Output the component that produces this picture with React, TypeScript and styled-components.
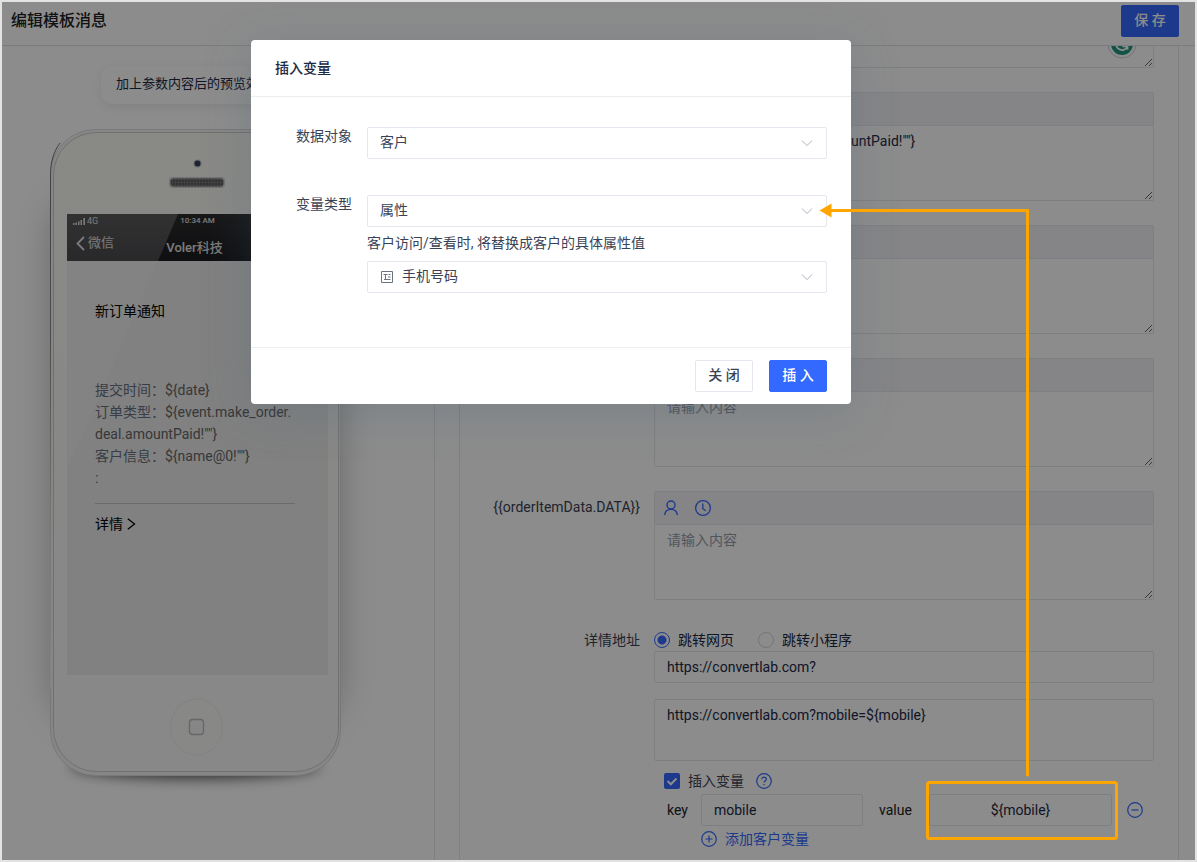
import React from "react";
import styled, { createGlobalStyle, css } from "styled-components";

const ink = "#1d2843";
const label = "#3a4356";
const blue = "#3369ff";
const line = "#e6e7ee";

const Global = createGlobalStyle`
  * { box-sizing: border-box; }
  body {
    margin: 0;
    background: #e3e3e3;
    color: ${label};
    font: 400 14px/22px Roboto, "Noto Sans CJK SC", sans-serif;
  }
  button, input, select, textarea { font: inherit; color: inherit; margin: 0; }
`;

const Frame = styled.div`
  position: relative;
  height: 100vh;
  border: 2px solid #e3e3e3;
  overflow: hidden;
`;

const Page = styled.div`
  display: flex;
  flex-direction: column;
  height: 100%;
  background: #fff;
  isolation: isolate;
`;

const Header = styled.header`
  display: flex;
  flex: none;
  align-items: flex-start;
  justify-content: space-between;
  height: 44px;
  padding: 3px 16px 0 9px;
  border-bottom: 1px solid #e2e2e6;
`;

const PageTitle = styled.h1`
  margin: 0;
  padding-top: 4px;
  font-size: 16px;
  line-height: 24px;
  font-weight: 500;
  color: #222;
`;

const Button = styled.button<{ $primary?: boolean }>`
  width: 58px;
  height: 32px;
  padding: 0 0 2px;
  border: 1px solid ${(p) => (p.$primary ? blue : line)};
  border-radius: 2px;
  background: ${(p) => (p.$primary ? blue : "#fff")};
  color: ${(p) => (p.$primary ? "#fff" : label)};
  font-weight: 500;
  line-height: 22px;
`;

const Columns = styled.div`
  display: flex;
  flex: 1;
  gap: 24px;
  min-height: 0;
  padding-right: 16px;
  overflow: hidden;
`;

const Preview = styled.section`
  display: flex;
  flex: none;
  flex-direction: column;
  gap: 25px;
  width: 433px;
  padding: 20px 0 0 48px;
  border-right: 1px solid ${line};
`;

const Bubble = styled.p`
  align-self: flex-start;
  margin: 0 0 0 51px;
  padding: 7px 15px 9px;
  border-radius: 12px;
  box-shadow: 0 3px 10px rgba(0, 0, 0, 0.08);
  font-size: 13px;
  color: ${ink};
`;

const Phone = styled.div`
  display: grid;
  width: 291px;
  height: 647px;
  > * { grid-area: 1 / 1; }
`;

const PhoneArt = styled.svg`
  display: block;
  overflow: visible;
`;

const Screen = styled.div`
  z-index: 1;
  margin: 85px 13px 101px 17px;
  color: #666;
`;

const StatusBar = styled.div`
  display: grid;
  grid-template-columns: 1fr 1fr 1fr;
  align-items: center;
  height: 14px;
  padding: 0 6px;
  font-size: 9px;
  line-height: 14px;
  color: #e0e0e0;
`;

const Signal = styled.span`
  display: flex;
  align-items: center;
  gap: 2px;
`;

const ClockText = styled.b`
  font-size: 8px;
  text-align: center;
  font-weight: 500;
`;

const NavBar = styled.div`
  display: grid;
  grid-template-columns: 1fr 1fr 1fr;
  align-items: start;
  height: 33px;
  padding: 4px 15px 0 9px;
  font-size: 13px;
  line-height: 22px;
  color: #e0e0e0;
`;

const Back = styled.span`
  display: flex;
  align-items: center;
  gap: 3px;
`;

const Account = styled.b`
  padding-top: 5px;
  font-weight: 500;
  text-align: center;
  white-space: nowrap;
`;

const Message = styled.article`
  padding: 39px 33px 0 28px;
`;

const MessageTitle = styled.h2`
  margin: 0 0 57px;
  font-size: 14px;
  line-height: 22px;
  font-weight: 400;
  color: #000;
`;

const MessageLine = styled.p`
  margin: 0;
  span { color: #667080; }
`;

const MessageLink = styled.a`
  display: flex;
  align-items: center;
  gap: 4px;
  margin-top: 14px;
  padding-top: 9px;
  border-top: 1px solid #c4c4c4;
  color: #000;
  text-decoration: none;
`;

const Form = styled.form`
  display: flex;
  flex: 1;
  flex-direction: column;
  gap: 24px;
  min-width: 0;
  padding-right: 24px;
  border: 1px solid ${line};
  border-width: 0 1px;
`;

const Row = styled.div`
  display: grid;
  flex: none;
  grid-template-columns: 180px minmax(0, 1fr);
  column-gap: 14px;
`;

const RowLabel = styled.label`
  padding-top: 5px;
  text-align: right;
`;

const FieldBox = styled.div`
  position: relative;
  grid-column: 2;
`;

const Tools = styled.div`
  display: flex;
  align-items: center;
  gap: 14px;
  height: 34px;
  padding-left: 7px;
  border: 1px solid ${line};
  border-radius: 2px 2px 0 0;
  background: #f2f2f6;
`;

const ToolButton = styled.button`
  display: flex;
  padding: 0;
  border: 0;
  background: none;
  color: ${blue};
`;

const control = css`
  display: block;
  width: 100%;
  padding: 4px 12px;
  border: 1px solid ${line};
  border-radius: 2px;
  outline: none;
  background: transparent;
  color: ${ink};
  &::placeholder { color: #959baa; opacity: 1; }
`;

const Area = styled.textarea<{ $kind?: "clipped" | "fixed" }>`
  ${control}
  height: 75px;
  border-top: 0;
  resize: vertical;
  ${(p) => p.$kind === "clipped" && "height: 22px;"}
  ${(p) => p.$kind === "fixed" && `height: 62px; border-top: 1px solid ${line}; resize: none;`}
`;

const Input = styled.input<{ $center?: boolean }>`
  ${control}
  height: 32px;
  ${(p) => p.$center && "text-align: center;"}
`;

const Checker = styled.svg`
  position: absolute;
  right: 17px;
  top: -17px;
`;

const Stack = styled.div`
  display: flex;
  flex-direction: column;
  gap: 16px;
`;

const Radios = styled.div`
  display: flex;
  gap: 24px;
  height: 27px;
  padding-top: 5px;
`;

const Choice = styled.label`
  display: flex;
  align-items: center;
  gap: 8px;
  height: 22px;
  color: ${ink};
`;

const Radio = styled.input`
  appearance: none;
  width: 16px;
  height: 16px;
  margin: 0;
  border: 1px solid #d3d5de;
  border-radius: 50%;
  &:checked {
    border-color: ${blue};
    background: radial-gradient(circle, ${blue} 4px, transparent 5px);
  }
`;

const CheckBox = styled.input`
  appearance: none;
  width: 16px;
  height: 16px;
  margin: 0;
  border-radius: 2px;
  background: ${blue};
`;

const TickHolder = styled.span`
  display: grid;
  > * { grid-area: 1 / 1; }
  svg { pointer-events: none; }
`;

const Params = styled.div`
  padding-left: 10px;
  margin-top: -8px;
`;

const ParamHead = styled.div`
  display: flex;
  align-items: center;
  gap: 12px;
  height: 24px;
  label { color: ${label}; }
`;

const PairInputs = styled.div`
  display: flex;
  align-items: center;
  height: 32px;
  margin-top: 1px;
  padding: 0 11px 0 3px;
  color: #222;
`;

const PairLabel = styled.label<{ $w: number }>`
  flex: none;
  width: ${(p) => p.$w}px;
`;

const KeyCell = styled.div`
  flex: none;
  width: 162px;
  margin-right: 16px;
`;

const ValueCell = styled.div`
  flex: 1;
  margin-right: 15px;
`;

const AddLink = styled.button`
  display: flex;
  align-items: center;
  gap: 8px;
  height: 26px;
  margin-left: 37px;
  padding: 0;
  border: 0;
  background: none;
  color: ${blue};
`;

const Mask = styled.div`
  position: absolute;
  inset: 0;
  display: flex;
  align-items: flex-start;
  padding: 38px 0 0 249px;
  background: rgba(0, 0, 0, 0.45);
`;

const Dialog = styled.div`
  width: 600px;
  border-radius: 4px;
  background: #fff;
  box-shadow: 0 8px 48px rgba(70, 100, 120, 0.25);
`;

const DialogTitle = styled.h2`
  margin: 0;
  padding: 17px 24px;
  border-bottom: 1px solid #ecedf0;
  font-size: 14px;
  line-height: 22px;
  font-weight: 500;
  color: ${ink};
`;

const DialogBody = styled.div`
  display: flex;
  flex-direction: column;
  gap: 36px;
  padding: 30px 24px 54px;
`;

const DialogRow = styled.div`
  display: grid;
  grid-template-columns: 77px 1fr;
  column-gap: 15px;
  > label { height: 20px; line-height: 18px; text-align: right; }
`;

const SelectBox = styled.div`
  display: flex;
  align-items: center;
  position: relative;
  svg { position: absolute; pointer-events: none; }
  svg:last-child { right: 14px; }
  svg:first-child { left: 14px; }
`;

const Select = styled.select<{ $icon?: boolean }>`
  appearance: none;
  width: 100%;
  height: 32px;
  padding: 0 32px 2px ${(p) => (p.$icon ? 34 : 12)}px;
  border: 1px solid ${line};
  border-radius: 2px;
  background: #fff;
  color: ${label};
`;

const Hint = styled.p`
  margin: 5px 0 7px;
`;

const DialogFooter = styled.div`
  display: flex;
  justify-content: flex-end;
  gap: 16px;
  padding: 12px 24px;
  border-top: 1px solid #ecedf0;
`;

const Callout = styled.svg`
  position: absolute;
  left: 816px;
  top: 198px;
  pointer-events: none;
`;

const Down = () => (
  <svg width="12" height="12" viewBox="0 0 12 12" fill="none" stroke="#aeb4c1">
    <path d="M.8 3.500 6 8.500l5.200-5" />
  </svg>
);

const UserIcon = () => (
  <svg width="18" height="18" viewBox="0 0 18 18" fill="none" stroke="currentColor" strokeWidth="1.4">
    <circle cx="9" cy="6" r="4" />
    <path d="M2.700 16c.3-3.500 2.500-5.600 6.300-5.600s6 2.100 6.300 5.600" />
  </svg>
);

const ClockIcon = () => (
  <svg width="18" height="18" viewBox="0 0 18 18" fill="none" stroke="currentColor" strokeWidth="1.3">
    <circle cx="9" cy="9" r="7.400" />
    <path d="M8.800 4.500v5.200l3 2" />
  </svg>
);

const RoundIcon = ({ children }: { children: React.ReactNode }) => (
  <svg width="16" height="16" viewBox="0 0 16 16" fill="none" stroke={blue} strokeWidth="1.2">
    <circle cx="8" cy="8" r="7.300" />
    {children}
  </svg>
);

const PhoneDrawing = () => (
  <PhoneArt width="291" height="647" viewBox="0 0 291 647" aria-hidden="true">
    <defs>
      <filter id="side" x="-50%" y="-20%" width="200%" height="140%">
        <feGaussianBlur stdDeviation="18" />
      </filter>
      <filter id="foot" x="-20%" y="-150%" width="140%" height="400%">
        <feGaussianBlur stdDeviation="7" />
      </filter>
      <linearGradient id="shell" x1="0" y1="0" x2="0" y2="1">
        <stop offset="0" stopColor="#f9f9f5" />
        <stop offset=".5" stopColor="#f8f8f5" />
        <stop offset=".75" stopColor="#f8f8f8" />
      </linearGradient>
      <linearGradient id="bar" x1="0" y1="0" x2="0" y2="1">
        <stop offset="0" stopColor="#5a5a5c" />
        <stop offset="1" stopColor="#4b4b4e" />
      </linearGradient>
      <linearGradient id="barDark" x1="0" y1="0" x2="0" y2="1">
        <stop offset="0" stopColor="#2c2c2e" />
        <stop offset="1" stopColor="#1c1c1f" />
      </linearGradient>
      <linearGradient id="edge" x1="0" y1="0" x2="0" y2="1">
        <stop offset="0" stopColor="#777" />
        <stop offset=".35" stopColor="#8a8a8a" />
        <stop offset=".7" stopColor="#d8d8d8" />
        <stop offset="1" stopColor="#eee" />
      </linearGradient>
      <pattern id="mesh" width="3" height="3" patternUnits="userSpaceOnUse">
        <rect width="3" height="3" fill="#777" />
        <circle cx="1" cy="1" r="1" fill="#555" />
      </pattern>
    </defs>
    <rect x="2" y="60" width="287" height="540" rx="50" fill="#000" opacity=".26" filter="url(#side)" />
    <ellipse cx="145" cy="636" rx="124" ry="13" fill="#000" opacity=".7" filter="url(#foot)" />
    <rect x=".5" y=".5" width="290" height="646" rx="45" fill="#f5f5f5" stroke="#dadada" />
    <path d="M.5 560V45C.5 33 4 22 10 14" fill="none" stroke="url(#edge)" />
    <rect x="3.500" y="3.500" width="285" height="639" rx="43" fill="url(#shell)" stroke="#cdcdcd" />
    <circle cx="147.500" cy="34.500" r="4" fill="#c9c9c9" />
    <circle cx="147.500" cy="34.500" r="3" fill="#33405e" />
    <rect x="119" y="48" width="56" height="11" rx="4" fill="#cfcfcf" />
    <rect x="120.500" y="49.500" width="53" height="8" rx="3" fill="url(#mesh)" />
    <rect x="17" y="85" width="261" height="461" fill="#ebebeb" />
    <path d="M108 132H17V342z" fill="#eee" />
    <rect x="17" y="85" width="261" height="47" fill="url(#barDark)" />
    <path d="M17 85h111l-20 47H17z" fill="url(#bar)" />
    <ellipse cx="146.500" cy="598" rx="26" ry="28" fill="#f7f7f5" stroke="#ededea" />
    <rect x="139.500" y="590.500" width="14" height="15" rx="3" fill="#f5f5f5" stroke="#bcbcbc" strokeWidth="1.400" />
  </PhoneArt>
);

const Editor = ({ id, text, title }: { id: string; text?: string; title?: string }) => (
  <Row>
    {title && <RowLabel htmlFor={id}>{title}</RowLabel>}
    <FieldBox>
      <Tools>
        <ToolButton type="button" aria-label="客户"><UserIcon /></ToolButton>
        <ToolButton type="button" aria-label="时间"><ClockIcon /></ToolButton>
      </Tools>
      <Area id={id} defaultValue={text} placeholder="请输入内容" spellCheck={false} />
    </FieldBox>
  </Row>
);

export default function App() {
  return (
    <Frame>
      <Global />
      <Page>
        <Header>
          <PageTitle>编辑模板消息</PageTitle>
          <Button $primary>保 存</Button>
        </Header>
        <Columns>
          <Preview>
            <Bubble>加上参数内容后的预览效果</Bubble>
            <Phone>
              <PhoneDrawing />
              <Screen>
                <StatusBar>
                  <Signal>
                    <svg width="12" height="7" viewBox="0 0 12 7" fill="#ddd">
                      <path d="M0 5h1.500v2H0zM2.500 4.500H4V7H2.500zM5 3.500h1.500V7H5zM7.500 2H9v5H7.500zM10.300 0H12v7h-1.700z" />
                    </svg>
                    4G
                  </Signal>
                  <ClockText>10:34 AM</ClockText>
                </StatusBar>
                <NavBar>
                  <Back>
                    <svg width="9" height="15" viewBox="0 0 9 15" fill="none" stroke="currentColor" strokeWidth="1.800">
                      <path d="M8 1 1.500 7.500 8 14" />
                    </svg>
                    微信
                  </Back>
                  <Account>Voler科技</Account>
                </NavBar>
                <Message>
                  <MessageTitle>新订单通知</MessageTitle>
                  <MessageLine><span>提交时间：</span>{"${date}"}</MessageLine>
                  <MessageLine>
                    <span>订单类型：</span>{"${event.make_order."}<wbr />{'deal.amountPaid!""}'}
                  </MessageLine>
                  <MessageLine><span>客户信息：</span>{'${name@0!""}'}</MessageLine>
                  <MessageLine>:</MessageLine>
                  <MessageLink href="#">
                    详情
                    <svg width="9" height="12" viewBox="0 0 9 12" fill="none" stroke="currentColor" strokeWidth="1.300">
                      <path d="M.8.800 7.500 6 .8 11.200" />
                    </svg>
                  </MessageLink>
                </Message>
              </Screen>
            </Phone>
          </Preview>
          <Form>
            <Row>
              <FieldBox>
                <Area $kind="clipped" aria-label="内容" />
                <Checker width="30" height="30" viewBox="0 0 30 30">
                  <circle cx="15" cy="15" r="14" fill="#fff" stroke="#cfd0d8" />
                  <circle cx="15" cy="15" r="11" fill="#1f9a82" />
                  <path d="M20.500 17.500A6 6 0 1 1 19.500 11M15.500 17.300h5v3.500" fill="none" stroke="#fff" strokeWidth="1.800" />
                </Checker>
              </FieldBox>
            </Row>
            <Editor id="amount" text={'${event.make_order.deal.amountPaid!""}'} />
            <Editor id="name" />
            <Editor id="extra" />
            <Editor id="order" title="{{orderItemData.DATA}}" />
            <Row>
              <RowLabel as="span">详情地址</RowLabel>
              <FieldBox>
                <Radios>
                  <Choice><Radio type="radio" name="target" defaultChecked />跳转网页</Choice>
                  <Choice><Radio type="radio" name="target" />跳转小程序</Choice>
                </Radios>
                <Stack>
                  <Input aria-label="网页地址" defaultValue="https://convertlab.com?" />
                  <Area $kind="fixed" aria-label="完整地址" spellCheck={false} defaultValue="https://convertlab.com?mobile=${mobile}" />
                  <Params>
                    <ParamHead>
                      <Choice>
                        <TickHolder>
                          <CheckBox type="checkbox" defaultChecked />
                          <svg width="16" height="16" viewBox="0 0 16 16" fill="none" stroke="#fff" strokeWidth="2">
                            <path d="m3.500 8 3.300 3.300 5.700-5.800" />
                          </svg>
                        </TickHolder>
                        插入变量
                      </Choice>
                      <RoundIcon>
                        <path d="M5.800 6.300c0-3 4.500-2.800 4.500-.1C10.300 7.800 8 7.700 8 9.600M8 11v1.300" />
                      </RoundIcon>
                    </ParamHead>
                    <PairInputs>
                      <PairLabel $w={34} htmlFor="key">key</PairLabel>
                      <KeyCell><Input id="key" defaultValue="mobile" /></KeyCell>
                      <PairLabel $w={50} htmlFor="value">value</PairLabel>
                      <ValueCell><Input $center id="value" defaultValue="${mobile}" /></ValueCell>
                      <ToolButton type="button" aria-label="删除">
                        <RoundIcon><path d="M4.500 8h7" /></RoundIcon>
                      </ToolButton>
                    </PairInputs>
                    <AddLink type="button">
                      <RoundIcon><path d="M4.500 8h7M8 4.500v7" /></RoundIcon>
                      添加客户变量
                    </AddLink>
                  </Params>
                </Stack>
              </FieldBox>
            </Row>
          </Form>
        </Columns>
      </Page>
      <Mask>
        <Dialog role="dialog" aria-labelledby="dialog-title">
          <DialogTitle id="dialog-title">插入变量</DialogTitle>
          <DialogBody>
            <DialogRow>
              <label htmlFor="object">数据对象</label>
              <SelectBox>
                <Select id="object"><option>客户</option></Select>
                <Down />
              </SelectBox>
            </DialogRow>
            <DialogRow>
              <label htmlFor="kind">变量类型</label>
              <div>
                <SelectBox>
                  <Select id="kind"><option>属性</option></Select>
                  <Down />
                </SelectBox>
                <Hint>客户访问/查看时, 将替换成客户的具体属性值</Hint>
                <SelectBox>
                  <Select id="attribute" aria-label="属性" $icon><option>手机号码</option></Select>
                  <AttributeIcon width="12" height="12" viewBox="0 0 12 12" fill="none" stroke="#6b7280">
                    <path d="M.5.500h11v11H.5zM2.500 3.500h4M4.500 3.500v5M7.500 3.500h2M7 6h2.500M3 8.500h6.500" />
                  </AttributeIcon>
                  <Down />
                </SelectBox>
              </div>
            </DialogRow>
          </DialogBody>
          <DialogFooter>
            <Button>关 闭</Button>
            <Button $primary>插 入</Button>
          </DialogFooter>
        </Dialog>
      </Mask>
      <Callout width="304" height="644" viewBox="0 0 304 644" fill="none" stroke="#ffa500" strokeWidth="3">
        <path d="M12 10.500h197.500V575" strokeLinecap="round" />
        <path d="M1.500 10.500 13.500 3.500v14z" fill="#ffa500" stroke="none" />
        <rect x="109.500" y="582.500" width="189" height="56" rx="2" />
      </Callout>
    </Frame>
  );
}

const AttributeIcon = styled.svg`
  left: 14px;
`;
